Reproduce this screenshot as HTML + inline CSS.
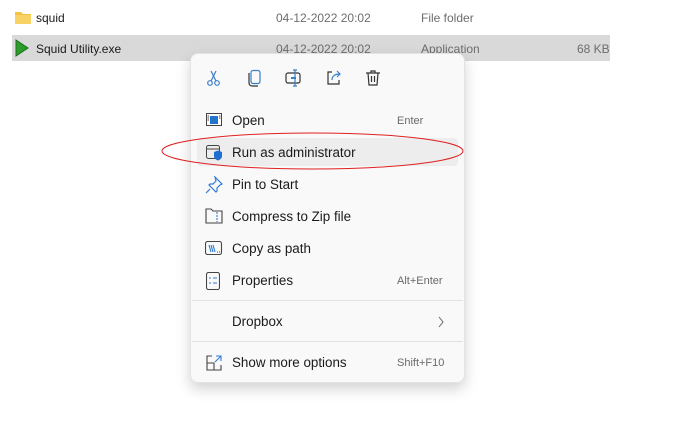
<!DOCTYPE html>
<html><head><style>
body{margin:0;width:689px;height:433px;background:#fff;font-family:"Liberation Sans",sans-serif;position:relative;overflow:hidden}
.t{position:absolute;font-size:12px;color:#1a1a1a;white-space:nowrap}
.g{color:#6d6d6d}
.menu{position:absolute;left:190px;top:53px;width:273px;height:328px;background:#f9f9f9;border:1px solid #e3e3e3;border-radius:8px;box-shadow:0 6px 14px rgba(0,0,0,.18)}
.m{position:absolute;font-size:13.4px;color:#1a1a1a;white-space:nowrap}
.k{position:absolute;font-size:11px;color:#6a6a6a;white-space:nowrap}
.sep{position:absolute;left:1px;width:271px;height:1px;background:#e2e2e2}
svg{position:absolute}
</style></head><body>
<div style="position:absolute;left:12px;top:35px;width:598px;height:26px;background:#d9d9d9"></div>
<svg style="left:14px;top:10px" width="18" height="15"><path d="M1 2h6l2 2h8v10H1z" fill="#f6c243"/><path d="M1 5h16v9H1z" fill="#f9d266"/></svg>
<div class="t" style="left:36px;top:11px">squid</div>
<div class="t g" style="left:276px;top:11px">04-12-2022 20:02</div>
<div class="t g" style="left:421px;top:11px">File folder</div>
<svg style="left:15px;top:39px" width="14" height="18"><path d="M1 1L13 9L1 17z" fill="#2a9d2a" stroke="#1a6e1a" stroke-width="1"/></svg>
<div class="t" style="left:36px;top:42px">Squid Utility.exe</div>
<div class="t g" style="left:276px;top:42px">04-12-2022 20:02</div>
<div class="t g" style="left:421px;top:42px">Application</div>
<div class="t g" style="left:577px;top:42px">68 KB</div>
<div class="menu">
<svg style="left:14px;top:15px" width="18" height="18" fill="none" stroke="#3a7ec8" stroke-width="1.2"><circle cx="5" cy="14" r="2.3"/><circle cx="12" cy="14" r="2.3"/><path d="M6 12L11 2M11 12L6 2"/></svg>
<svg style="left:56px;top:15px" width="16" height="18" fill="none" stroke="#333" stroke-width="1.2"><rect x="4" y="1.5" width="9" height="13" rx="2" stroke="#3a7ec8"/><path d="M2 4v10a3 3 0 003 3h6"/></svg>
<svg style="left:93px;top:15px" width="18" height="18" fill="none" stroke="#333" stroke-width="1.2"><rect x="2" y="4" width="14" height="10" rx="2"/><path d="M7 9h5" stroke="#3a7ec8" stroke-width="2"/><path d="M11 1v16M9 1h4M9 17h4" stroke="#3a7ec8"/></svg>
<svg style="left:134px;top:15px" width="18" height="18" fill="none" stroke="#333" stroke-width="1.2"><path d="M7 3H3v12h11v-4"/><path d="M7 11c0-4 3-6 8-6M12 2l3 3-3 3" stroke="#3a7ec8"/></svg>
<svg style="left:174px;top:15px" width="16" height="18" fill="none" stroke="#333" stroke-width="1.2"><path d="M1 4h14M6 4V2h4v2M3 4l1 12h8l1-12M6.5 7v6M9.5 7v6"/></svg>
<svg style="left:15px;top:59px" width="16" height="13"><rect x=".5" y=".5" width="15" height="12" fill="#fff" stroke="#444"/><rect x="4" y="3" width="8" height="8" fill="#2173cc"/><path d="M1.5 3h1.5M1.5 5h1.5M1.5 7h1.5M13 3h1.5M13 5h1.5" stroke="#444"/></svg>
<div class="m" style="left:41px;top:59px">Open</div><div class="k" style="left:206px;top:61px">Enter</div>
<div style="position:absolute;left:6px;top:84px;width:261px;height:28px;background:#ededed;border-radius:4px"></div>
<svg style="left:15px;top:91px" width="18" height="16" fill="none"><rect x=".5" y=".5" width="13" height="13" rx="2" stroke="#444"/><path d="M1 4h12" stroke="#444"/><path d="M8 7l4-1.5 4 1.5v4c0 2.5-2 3.8-4 4.5-2-.7-4-2-4-4.5z" fill="#1f6fd0"/></svg>
<div class="m" style="left:41px;top:91px">Run as administrator</div>
<svg style="left:14px;top:122px" width="18" height="18" fill="none" stroke="#2f7bd6" stroke-width="1.2"><path d="M10 1l7 7-2 1-3 3 0 3-1 1-7-7 1-1 3 0 3-3z"/><path d="M5 13L1 17"/></svg>
<div class="m" style="left:41px;top:123px">Pin to Start</div>
<svg style="left:14px;top:154px" width="18" height="16" fill="none" stroke="#444" stroke-width="1.1"><path d="M1 1h5l2 2h9v12H1z"/><path d="M12 4v10" stroke="#2f7bd6" stroke-dasharray="2 1"/></svg>
<div class="m" style="left:41px;top:155px">Compress to Zip file</div>
<svg style="left:14px;top:187px" width="18" height="14" fill="none" stroke="#444" stroke-width="1.1"><rect x=".5" y=".5" width="16" height="13" rx="2"/><path d="M4 4l2 7M6 4l2 7M8 4l2 7" stroke="#2f7bd6"/><path d="M12 11h1M14 11h1"/></svg>
<div class="m" style="left:41px;top:187px">Copy as path</div>
<svg style="left:15px;top:218px" width="14" height="18" fill="none" stroke="#444" stroke-width="1.1"><rect x=".5" y=".5" width="13" height="17" rx="2"/><path d="M3 6h2M3 11h2M7 6h4M7 11h4" stroke="#2f7bd6"/></svg>
<div class="m" style="left:41px;top:219px">Properties</div><div class="k" style="left:206px;top:221px">Alt+Enter</div>
<div class="sep" style="top:246px"></div>
<div class="m" style="left:41px;top:260px">Dropbox</div>
<svg style="left:246px;top:262px" width="8" height="12" fill="none" stroke="#666"><path d="M2 1l4 5-4 5"/></svg>
<div class="sep" style="top:287px"></div>
<svg style="left:14px;top:300px" width="18" height="18" fill="none" stroke="#444" stroke-width="1.1"><path d="M7 2H2v14h14v-5M2 9h7v7"/><path d="M10 8l6-6M11 2h5v5" stroke="#2f7bd6"/></svg>
<div class="m" style="left:41px;top:301px">Show more options</div><div class="k" style="left:206px;top:303px">Shift+F10</div>
</div>
<svg style="left:0;top:0" width="689" height="433"><ellipse cx="312.5" cy="151" rx="150.5" ry="18" fill="none" stroke="#e02020" stroke-width="1"/></svg>
</body></html>
